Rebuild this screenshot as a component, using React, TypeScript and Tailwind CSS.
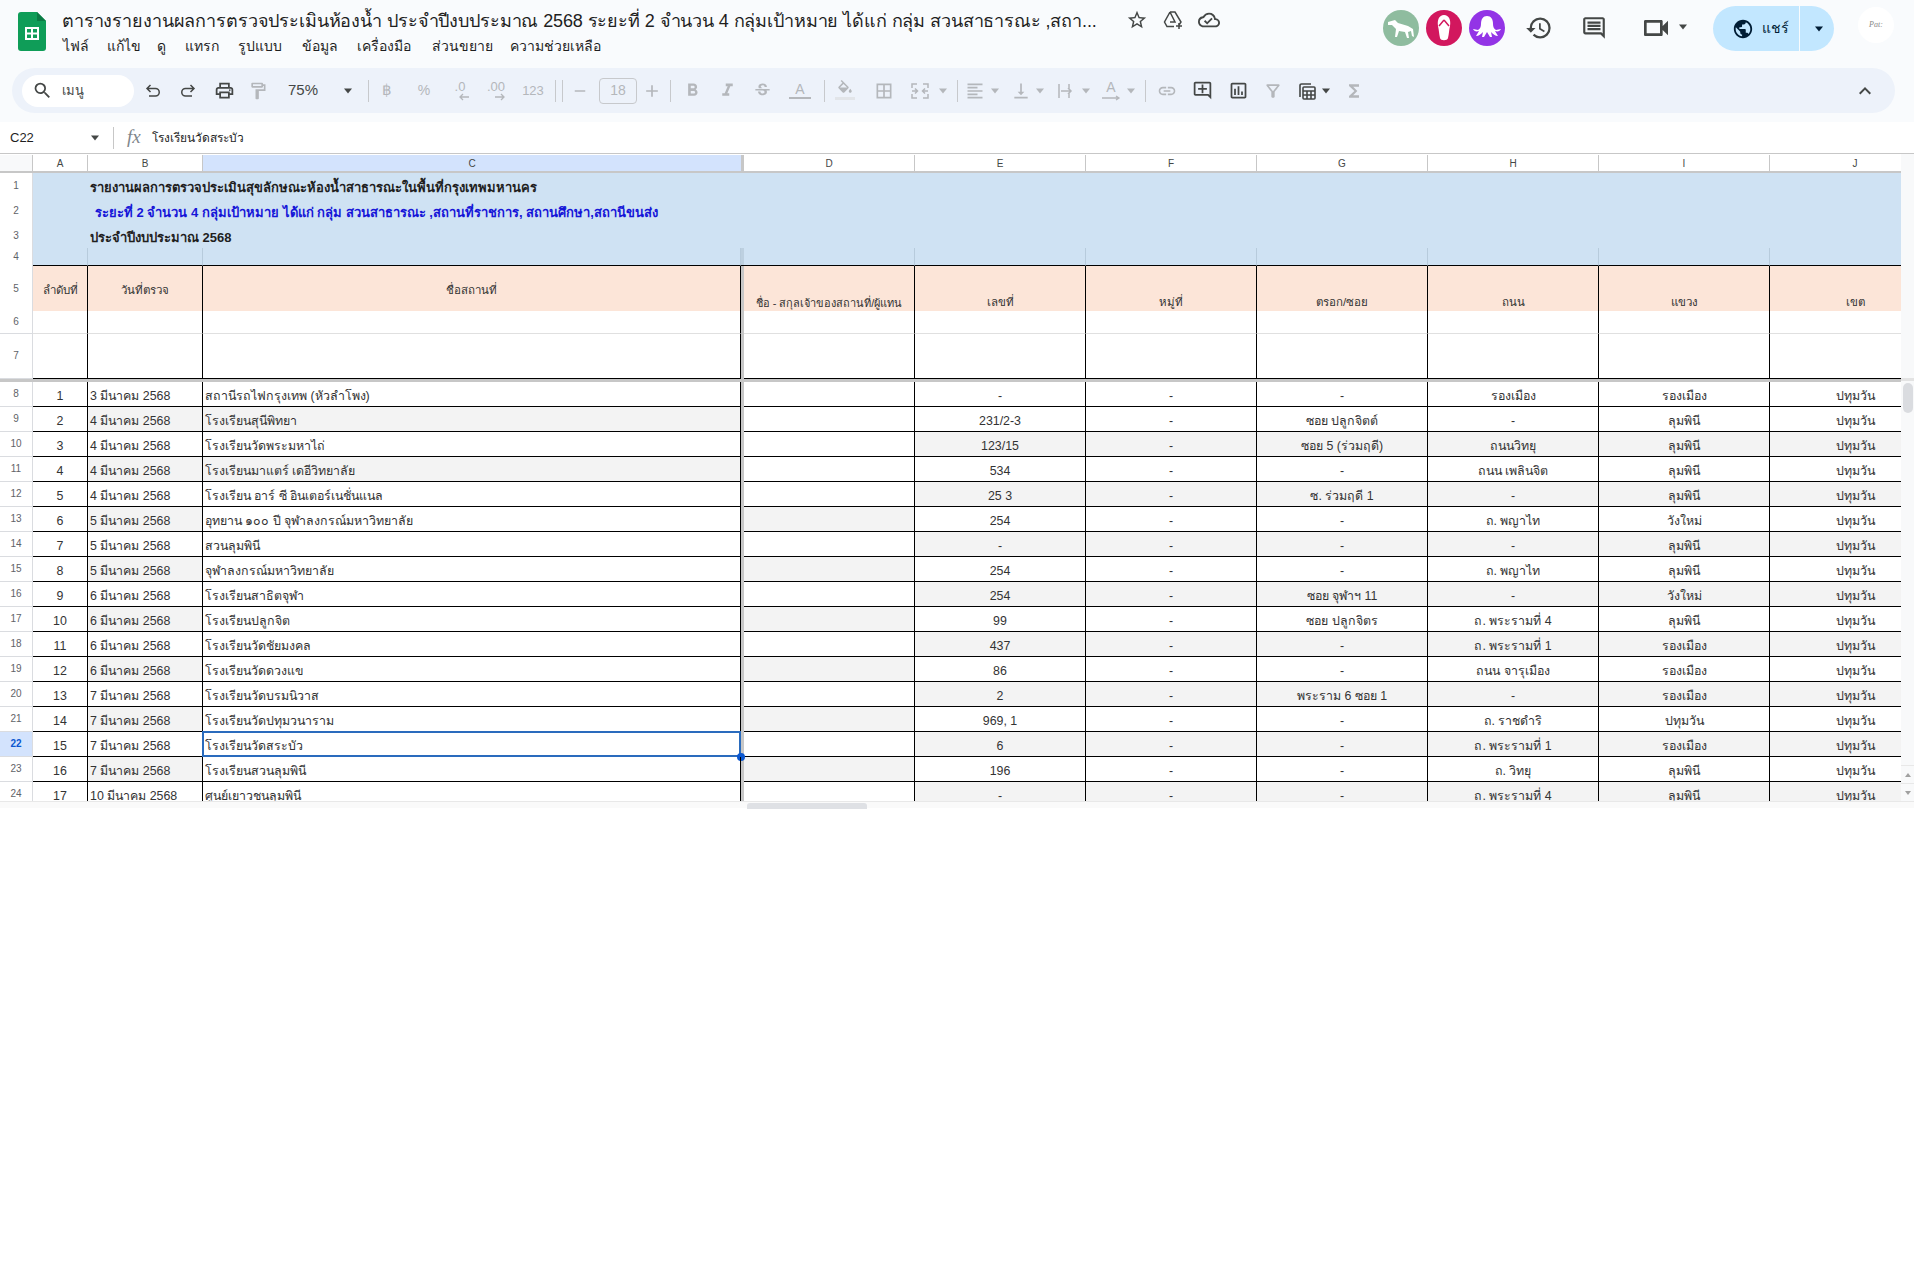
import React from "react";
import {
  MdSearch, MdOutlinePrint, MdOutlineFormatPaint, MdRemove, MdAdd,
  MdFormatBold, MdFormatItalic, MdStrikethroughS, MdBorderAll, MdFormatAlignLeft,
  MdVerticalAlignBottom, MdLink, MdOutlineAddComment, MdOutlineInsertChart, MdOutlineFilterAlt, MdFunctions,
  MdKeyboardArrowUp, MdStarBorder, MdOutlineCloudDone, MdHistory, MdOutlineComment,
  MdOutlineVideocam, MdPublic,
} from "react-icons/md";

const dis = "text-[#b4b7bb]";
const on = "text-[#444746]";

function Caret({ cls = "" }: { cls?: string }) {
  return (
    <div className={`flex w-3 shrink-0 items-center justify-center ${cls}`}>
      <svg width="10" height="6" viewBox="0 0 10 6"><path d="M1 0.5h8L5 5.5z" fill="currentColor" /></svg>
    </div>
  );
}
function Slot({ cls, children }: { cls: string; children: React.ReactNode }) {
  return <div className={`flex h-6 w-6 shrink-0 items-center justify-center ${cls}`}>{children}</div>;
}
function Sep({ cls }: { cls: string }) {
  return <div className={`h-[22px] w-px shrink-0 bg-[#c7c9cc] ${cls}`} />;
}
function Decimal({ label, right }: { label: string; right?: boolean }) {
  return (
    <div className="flex flex-col items-center leading-none">
      <span className="text-[13px] leading-[12px]">{label}</span>
      <svg width="12" height="8" viewBox="0 0 12 8" className="ml-2">
        {right ? <path d="M1 4h9M7 1l3 3-3 3" stroke="currentColor" fill="none" strokeWidth="1.3" /> : <path d="M11 4H2M5 1 2 4l3 3" stroke="currentColor" fill="none" strokeWidth="1.3" />}
      </svg>
    </div>
  );
}

function Toolbar() {
  return (
    <div className="ml-3 mr-[19px] flex h-[45px] items-center rounded-[23px] bg-[#edf2fa] pl-[10px]">
      <div className="flex h-8 w-[112px] shrink-0 items-center rounded-2xl bg-white pl-[10px]">
        <MdSearch size={21} className={on} />
        <span className="ml-[9px] text-[13px] text-[#444746]">เมนู</span>
      </div>
      <Slot cls={`ml-[7px] ${on}`}>
        <svg width="18" height="18" viewBox="0 0 18 18" fill="none" stroke="currentColor" strokeWidth="1.5">
          <path d="M6.500 3 3 6.500 6.500 10M3 6.500h8.500a3.700 3.700 0 0 1 0 7.500H5" />
        </svg>
      </Slot>
      <Slot cls={`ml-[11px] ${on}`}>
        <svg width="18" height="18" viewBox="0 0 18 18" fill="none" stroke="currentColor" strokeWidth="1.5">
          <path d="M11.500 3 15 6.500 11.500 10M15 6.500H6.500a3.700 3.700 0 0 0 0 7.500H13" />
        </svg>
      </Slot>
      <Slot cls={`ml-[12px] ${on}`}><MdOutlinePrint size={21} /></Slot>
      <Slot cls={`ml-[10px] ${dis}`}><MdOutlineFormatPaint size={20} /></Slot>
      <div className={`ml-[13px] w-10 shrink-0 text-center text-[15px] ${on}`}>75%</div>
      <Caret cls={`ml-[19px] ${on}`} />
      <Sep cls="ml-[14px]" />
      <Slot cls={`ml-[6px] text-[15px] ${dis}`}>฿</Slot>
      <Slot cls={`ml-[13px] text-[14px] ${dis}`}>%</Slot>
      <Slot cls={`ml-[12px] ${dis}`}><Decimal label=".0" /></Slot>
      <Slot cls={`ml-[12px] ${dis}`}><Decimal label=".00" right /></Slot>
      <Slot cls={`ml-[13px] text-[13px] ${dis}`}>123</Slot>
      <Sep cls="ml-[10px]" />
      <Sep cls="ml-[6px]" />
      <Slot cls={`ml-[5px] ${dis}`}><MdRemove size={18} /></Slot>
      <div className="ml-[7px] flex h-[26px] w-[38px] shrink-0 items-center justify-center rounded-[4px] border border-[#c7c9cc] text-[14px] text-[#b4b7bb]">18</div>
      <Slot cls={`ml-[3px] ${dis}`}><MdAdd size={20} /></Slot>
      <Sep cls="ml-[6px]" />
      <Slot cls={`ml-[9px] ${dis}`}><MdFormatBold size={21} /></Slot>
      <Slot cls={`ml-[11px] ${dis}`}><MdFormatItalic size={21} /></Slot>
      <Slot cls={`ml-[11px] ${dis}`}><MdStrikethroughS size={19} /></Slot>
      <Slot cls={`ml-[14px] ${dis}`}>
        <div className="flex flex-col items-center">
          <span className="text-[14px] leading-[15px]">A</span>
          <span className="h-[2px] w-[22px] bg-[#b4b7bb]" />
        </div>
      </Slot>
      <Sep cls="ml-[12px]" />
      <Slot cls={`ml-[8px] ${dis}`}>
        <div className="flex flex-col items-center">
          <svg width="18" height="15" viewBox="0 0 24 20" fill="currentColor" className="-mt-[2px]">
            <path d="M16.56 8.94L7.620 0 6.210 1.410l2.380 2.380-5.150 5.150c-.59.59-.59 1.540 0 2.120l5.500 5.500c.29.29.68.44 1.060.44s.77-.15 1.060-.44l5.500-5.500c.59-.58.59-1.530 0-2.120zM5.210 10L10 5.210 14.790 10H5.210zM19 11.500s-2 2.170-2 3.500c0 1.100.9 2 2 2s2-.9 2-2c0-1.330-2-3.500-2-3.500z" />
          </svg>
          <span className="mt-[2px] h-[3px] w-5 bg-[#e2e5e9]" />
        </div>
      </Slot>
      <Slot cls={`ml-[15px] ${dis}`}><MdBorderAll size={20} /></Slot>
      <Slot cls={`ml-[12px] ${dis}`}>
        <svg width="18" height="18" viewBox="0 0 18 18" fill="none" stroke="currentColor" strokeWidth="1.500">
          <path d="M1 6V2h5M17 6V2h-5M1 12v4h5M17 12v4h-5M1 9h5M17 9h-5M4 6.500 6.500 9 4 11.500M14 6.500 11.500 9l2.500 2.500" />
        </svg>
      </Slot>
      <Caret cls={`ml-[5px] ${dis}`} />
      <Sep cls="ml-[8px]" />
      <Slot cls={`ml-[5px] ${dis}`}><MdFormatAlignLeft size={20} /></Slot>
      <Caret cls={`ml-[2px] ${dis}`} />
      <Slot cls={`ml-[8px] ${dis}`}><MdVerticalAlignBottom size={20} /></Slot>
      <Caret cls={`ml-[1px] ${dis}`} />
      <Slot cls={`ml-[7px] ${dis}`}>
        <svg width="18" height="18" viewBox="0 0 18 18" fill="none" stroke="currentColor" strokeWidth="1.500">
          <path d="M3 2v14M13 2v5M13 11v5M5 9h10M12 6l3 3-3 3" />
        </svg>
      </Slot>
      <Caret cls={`ml-[3px] ${dis}`} />
      <Slot cls={`ml-[7px] ${dis}`}>
        <div className="flex flex-col items-center">
          <span className="text-[14px] leading-[15px]">A</span>
          <svg width="20" height="6" viewBox="0 0 20 6" fill="none" stroke="currentColor" strokeWidth="1.300"><path d="M1 3h17M15 1l3 2-3 2" /></svg>
        </div>
      </Slot>
      <Caret cls={`ml-[2px] ${dis}`} />
      <Sep cls="ml-[8px]" />
      <Slot cls={`ml-[9px] ${dis}`}><MdLink size={20} /></Slot>
      <Slot cls={`ml-[11px] ${on}`}><MdOutlineAddComment size={21} /></Slot>
      <Slot cls={`ml-[12px] ${on}`}><MdOutlineInsertChart size={21} /></Slot>
      <Slot cls={`ml-[11px] ${dis}`}><MdOutlineFilterAlt size={20} /></Slot>
      <Slot cls={`ml-[10px] ${on}`}>
        <svg width="20" height="20" viewBox="0 0 20 20" fill="none" stroke="currentColor" strokeWidth="1.600">
          <path d="M3 16V4.500A1.500 1.500 0 0 1 4.500 3H14" />
          <rect x="6" y="6" width="12" height="12" rx="1" />
          <path d="M6 10h12M6 14h12M10 10v8M14 10v8" />
        </svg>
      </Slot>
      <Caret cls={`ml-[1px] ${on}`} />
      <Slot cls={`ml-[10px] ${dis}`}><MdFunctions size={20} /></Slot>
      <Slot cls={`ml-auto mr-[18px] ${on}`}><MdKeyboardArrowUp size={24} /></Slot>
    </div>
  );
}

function Horse() {
  return (
    <svg width="36" height="36" viewBox="0 0 36 36" className="shrink-0">
      <circle cx="18" cy="18" r="18" fill="#8fbc9f" />
      <path d="M5 12l7-2 3 3 10 3 5 3 1 8-2-1-1-5-3 1 1 6h-2l-2-6-6-1-2 6h-2l1-8-4-4-4 0z" fill="#fff" />
    </svg>
  );
}
function Flop() {
  return (
    <svg width="36" height="36" viewBox="0 0 36 36" className="shrink-0">
      <circle cx="18" cy="18" r="18" fill="#d2175e" />
      <path d="M18 5c5 0 7 5 6 11-1 4-1 8-2 12-.5 3-7.500 3-8 0-1-4-1-8-2-12-1-6 1-11 6-11z" fill="#fff" />
      <path d="M18 10l-5 6M18 10l5 6" stroke="#d2175e" strokeWidth="1.500" />
    </svg>
  );
}
function Octopus() {
  return (
    <svg width="36" height="36" viewBox="0 0 36 36" className="shrink-0">
      <circle cx="18" cy="18" r="18" fill="#9334e6" />
      <path d="M18 6c4 0 6 3 6 8 0 3 1 5 3 6l5-1c-1 2-3 3-6 2l3 5c-3 0-5-2-7-4l1 5h-2l-3-5-3 5h-2l1-5c-2 2-4 4-7 4l3-5c-3 1-5 0-6-2l5 1c2-1 3-3 3-6 0-5 2-8 6-8z" fill="#fff" />
    </svg>
  );
}

function Header() {
  const menu: [string, string][] = [
    ["ไฟล์", "w-[44px]"], ["แก้ไข", "w-[50px]"], ["ดู", "w-[28px]"], ["แทรก", "w-[53px]"], ["รูปแบบ", "w-[64px]"],
    ["ข้อมูล", "w-[55px]"], ["เครื่องมือ", "w-[75px]"], ["ส่วนขยาย", "w-[78px]"], ["ความช่วยเหลือ", "w-[100px]"],
  ];
  return (
    <div className="h-[122px] bg-[#f9fbfd] pt-[6px]">
      <div className="flex h-[46px] items-start pl-[18px]">
        <svg width="28" height="39" viewBox="0 0 28 39" className="mt-[6px] shrink-0">
          <path d="M3 0h16l9 9v27a3 3 0 0 1-3 3H3a3 3 0 0 1-3-3V3a3 3 0 0 1 3-3z" fill="#0f9d58" />
          <path d="M19 0l9 9h-9z" fill="#0b7a44" />
          <path d="M7 15h14v13H7z" fill="#fff" />
          <path d="M9 17h4v3.500H9zM15 17h4v3.500h-4zM9 22.500h4V26H9zM15 22.500h4V26h-4z" fill="#0f9d58" />
        </svg>
        <div className="ml-4 flex w-[1034px] flex-col">
          <div className="h-[30px] whitespace-nowrap text-[18px] leading-[30px] tracking-[-0.13px] text-[#1f1f1f]">
            ตารางรายงานผลการตรวจประเมินห้องน้ำ ประจำปีงบประมาณ 2568 ระยะที่ 2 จำนวน 4 กลุ่มเป้าหมาย ได้แก่ กลุ่ม สวนสาธารณะ ,สถา...
          </div>
          <div className="-mt-px ml-px flex h-[22px] items-center text-[14px] text-[#1f1f1f]">
            {menu.map(([t, w]) => <span key={t} className={`shrink-0 whitespace-nowrap ${w}`}>{t}</span>)}
          </div>
        </div>
        <div className="ml-[30px] mt-[3px] flex items-center text-[#444746]">
          <MdStarBorder size={22} />
          <svg width="22" height="22" viewBox="0 0 22 22" fill="none" stroke="currentColor" strokeWidth="1.500" className="ml-[14px]">
            <path d="M8 3h5l6 10-2 3M8 3 2.500 13 5 17.500h7M8 3l5 10H8" />
            <path d="M17 14v6M14 17h6" />
          </svg>
          <MdOutlineCloudDone size={22} className="ml-[14px]" />
        </div>
        <div className="ml-[163px] mt-[4px] flex items-center gap-[7px]">
          <Horse /><Flop /><Octopus />
        </div>
        <MdHistory size={28} className="ml-[20px] mt-[8px] shrink-0 text-[#444746]" />
        <MdOutlineComment size={26} className="ml-[28px] mt-[9px] shrink-0 text-[#444746]" />
        <MdOutlineVideocam size={32} className="ml-[33px] mt-[6px] shrink-0 text-[#444746]" />
        <Caret cls="ml-[5px] mt-[18px] text-[#444746]" />
        <div className="ml-6 flex h-[45px] w-[121px] shrink-0 items-center rounded-[23px] bg-[#c2e7ff] text-[#001d35]">
          <MdPublic size={22} className="ml-[19px] shrink-0" />
          <span className="ml-[8px] w-[27px] whitespace-nowrap text-[14px]">แชร์</span>
          <span className="ml-[10px] h-full w-px bg-[#f9fbfd]" />
          <Caret cls="ml-[13px]" />
        </div>
        <div className="ml-[24px] mt-[1px] flex h-9 w-9 shrink-0 items-center justify-center rounded-full bg-white font-['Liberation_Serif',serif] text-[8px] italic text-[#888]">Pat:</div>
      </div>
      <div className="mt-[16px]"><Toolbar /></div>
    </div>
  );
}

function FormulaBar() {
  return (
    <div className="flex h-[31px] items-center bg-white text-[#1f1f1f]">
      <span className="ml-[10px] w-[79px] text-[13px]">C22</span>
      <Caret cls="text-[#444746]" />
      <span className="ml-[12px] h-[22px] w-px bg-[#c7c7c7]" />
      <span className="ml-[13px] w-[25px] font-['Liberation_Serif',serif] text-[19px] italic text-[#80868b]">fx</span>
      <span className="text-[12px]">โรงเรียนวัดสระบัว</span>
    </div>
  );
}

type D = [string, string, string, string, string, string, string];
const base = "flex h-full shrink-0 items-center justify-center whitespace-nowrap";
const W = {
  H: "w-[33px]", A: "w-[55px]", B: "w-[115px]", C: "w-[538px]", X: "w-[3px]", S: "w-[171px]", J: "w-[171px]",
};

const rows: D[] = [
  ["3 มีนาคม 2568", "สถานีรถไฟกรุงเทพ (หัวลำโพง)", "-", "-", "-", "รองเมือง", "รองเมือง"],
  ["4 มีนาคม 2568", "โรงเรียนสุนีพิทยา", "231/2-3", "-", "ซอย ปลูกจิตต์", "-", "ลุมพินี"],
  ["4 มีนาคม 2568", "โรงเรียนวัดพระมหาไถ่", "123/15", "-", "ซอย 5 (ร่วมฤดี)", "ถนนวิทยุ", "ลุมพินี"],
  ["4 มีนาคม 2568", "โรงเรียนมาแตร์ เดอีวิทยาลัย", "534", "-", "-", "ถนน เพลินจิต", "ลุมพินี"],
  ["4 มีนาคม 2568", "โรงเรียน อาร์ ซี อินเตอร์เนชั่นแนล", "25 3", "-", "ซ. ร่วมฤดี 1", "-", "ลุมพินี"],
  ["5 มีนาคม 2568", "อุทยาน ๑๐๐ ปี จุฬาลงกรณ์มหาวิทยาลัย", "254", "-", "-", "ถ. พญาไท", "วังใหม่"],
  ["5 มีนาคม 2568", "สวนลุมพินี", "-", "-", "-", "-", "ลุมพินี"],
  ["5 มีนาคม 2568", "จุฬาลงกรณ์มหาวิทยาลัย", "254", "-", "-", "ถ. พญาไท", "ลุมพินี"],
  ["6 มีนาคม 2568", "โรงเรียนสาธิตจุฬา", "254", "-", "ซอย จุฬาฯ 11", "-", "วังใหม่"],
  ["6 มีนาคม 2568", "โรงเรียนปลูกจิต", "99", "-", "ซอย ปลูกจิตร", "ถ. พระรามที่ 4", "ลุมพินี"],
  ["6 มีนาคม 2568", "โรงเรียนวัดชัยมงคล", "437", "-", "-", "ถ. พระรามที่ 1", "รองเมือง"],
  ["6 มีนาคม 2568", "โรงเรียนวัดดวงแข", "86", "-", "-", "ถนน จารุเมือง", "รองเมือง"],
  ["7 มีนาคม 2568", "โรงเรียนวัดบรมนิวาส", "2", "-", "พระราม 6 ซอย 1", "-", "รองเมือง"],
  ["7 มีนาคม 2568", "โรงเรียนวัดปทุมวนาราม", "969, 1", "-", "-", "ถ. ราชดำริ", "ปทุมวัน"],
  ["7 มีนาคม 2568", "โรงเรียนวัดสระบัว", "6", "-", "-", "ถ. พระรามที่ 1", "รองเมือง"],
  ["7 มีนาคม 2568", "โรงเรียนสวนลุมพินี", "196", "-", "-", "ถ. วิทยุ", "ลุมพินี"],
  ["10 มีนาคม 2568", "ศูนย์เยาวชนลุมพินี", "-", "-", "-", "ถ. พระรามที่ 4", "ลุมพินี"],
];

function RowHead({ n, sel }: { n: number; sel?: boolean }) {
  return (
    <div className={`${base} ${W.H} border-b border-r border-[#dadce0] pb-[1px] text-[10px] ${sel ? "bg-[#d3e3fd] font-bold text-[#0b57d0]" : "bg-white text-[#5f6368]"}`}>{n}</div>
  );
}

function ColHead() {
  const c: [string, string][] = [["A", W.A], ["B", W.B], ["C", W.C], ["", W.X], ["D", W.S], ["E", W.S], ["F", W.S], ["G", W.S], ["H", W.S], ["I", W.S], ["J", W.J]];
  return (
    <div className="flex h-[19px] border-b-2 border-[#c7c7c7] pt-px text-[10px] text-[#444746]">
      <div className={`${W.H} h-full shrink-0 border-r border-[#c7c7c7] bg-[#f8f9fa]`} />
      {c.map(([t, w], i) => (
        <div key={i} className={`${base} ${w} ${t === "" ? "bg-[#c7c7c7]" : t === "C" ? "bg-[#d3e3fd]" : "border-r border-[#c7c7c7] bg-white"}`}>{t}</div>
      ))}
    </div>
  );
}

function Blue({ n, h, cls, text }: { n: number; h: string; cls: string; text: string }) {
  return (
    <div className={`flex ${h}`}>
      <div className={`${base} ${W.H} border-r border-[#dadce0] bg-white pb-[1px] text-[10px] text-[#5f6368]`}>{n}</div>
      <div className={`flex h-full w-[1868px] shrink-0 items-center whitespace-nowrap bg-[#cfe2f3] pt-[4px] text-[13px] font-bold ${cls}`}>{text}</div>
    </div>
  );
}

function Row4() {
  const line = "border-r border-[#b7cbdc]";
  return (
    <div className="flex h-[18px]">
      <div className={`${base} ${W.H} border-r border-[#dadce0] bg-white pb-[1px] text-[10px] text-[#5f6368]`}>4</div>
      {[W.A, W.B, W.C].map((w) => <div key={w} className={`${w} h-full shrink-0 bg-[#cfe2f3] ${line} border-b border-b-black`} />)}
      <div className={`${W.X} h-full shrink-0 border-b border-b-black bg-[#bdd0e0]`} />
      {[0, 1, 2, 3, 4, 5].map((i) => <div key={i} className={`${W.S} h-full shrink-0 bg-[#cfe2f3] ${line} border-b border-b-black`} />)}
      <div className={`${W.J} h-full shrink-0 border-b border-b-black bg-[#cfe2f3]`} />
    </div>
  );
}

function Row5() {
  const ct = `${base} bg-[#fce5d8] border-r border-black pt-[4px] text-[11.5px] text-[#333]`;
  const bt = `flex h-full shrink-0 items-end justify-center whitespace-nowrap bg-[#fce5d8] border-r border-black text-[11.5px] text-[#333]`;
  return (
    <div className="flex h-[45px]">
      <div className={`${base} ${W.H} border-r border-[#dadce0] bg-white pb-[1px] text-[10px] text-[#5f6368]`}>5</div>
      <div className={`${ct} ${W.A}`}>ลำดับที่</div>
      <div className={`${ct} ${W.B}`}>วันที่ตรวจ</div>
      <div className={`${ct} ${W.C}`}>ชื่อสถานที่</div>
      <div className={`${W.X} h-full shrink-0 bg-[#c7c7c7]`} />
      <div className={`${bt} ${W.S} text-[11px]`}>ชื่อ - สกุลเจ้าของสถานที่/ผู้แทน</div>
      <div className={`${bt} ${W.S}`}>เลขที่</div>
      <div className={`${bt} ${W.S}`}>หมู่ที่</div>
      <div className={`${bt} ${W.S}`}>ตรอก/ซอย</div>
      <div className={`${bt} ${W.S}`}>ถนน</div>
      <div className={`${bt} ${W.S}`}>แขวง</div>
      <div className={`${bt} ${W.J} border-r-0`}>เขต</div>
    </div>
  );
}

function EmptyRow({ n, h, b }: { n: number; h: string; b: string }) {
  const cell = `h-full shrink-0 border-r border-r-black border-b ${b}`;
  return (
    <div className={`flex ${h}`}>
      <RowHead n={n} />
      <div className={`${cell} ${W.A}`} />
      <div className={`${cell} ${W.B}`} />
      <div className={`${cell} ${W.C}`} />
      <div className={`${W.X} h-full shrink-0 bg-[#c7c7c7]`} />
      {[0, 1, 2, 3, 4, 5].map((i) => <div key={i} className={`${cell} ${W.S}`} />)}
      <div className={`h-full shrink-0 border-b ${b} ${W.J}`} />
    </div>
  );
}

function DataRow({ d, i }: { d: D; i: number }) {
  const n = i + 8;
  const odd = n % 2 === 1;
  const cell = "flex h-full shrink-0 items-center whitespace-nowrap border-b border-r border-black text-[12.4px] text-[#333] pt-[5px]";
  const gray = "bg-[#f3f3f3]";
  const bS = odd ? gray : "";
  const cS = n === 9 || n === 11 ? gray : "";
  const dS = odd && n >= 13 ? gray : "";
  const eS = !odd && n > 8 ? gray : "";
  return (
    <div className="flex h-[25px]">
      <RowHead n={n} sel={n === 22} />
      <div className={`${cell} ${W.A} justify-center`}>{i + 1}</div>
      <div className={`${cell} ${W.B} ${bS} pl-[2px] text-[11.5px]`}>{d[0]}</div>
      <div className={`${cell} ${W.C} ${cS} relative pl-[2px]`}>
        {d[1]}
        {n === 22 && (
          <>
            <div className="absolute -left-px -top-px bottom-[-1px] right-[-1px] border-2 border-[#2a6bbd]" />
            <div className="absolute bottom-[-5px] right-[-5px] h-2 w-2 rounded-full bg-[#0b57d0]" />
          </>
        )}
      </div>
      <div className={`${W.X} h-full shrink-0 bg-[#c7c7c7]`} />
      <div className={`${cell} ${W.S} ${dS}`} />
      {[d[2], d[3], d[4], d[5], d[6]].map((t, k) => (
        <div key={k} className={`${cell} ${W.S} ${eS} justify-center`}>{t}</div>
      ))}
      <div className={`${cell} ${W.J} ${eS} justify-center border-r-0`}>ปทุมวัน</div>
    </div>
  );
}

function Sheet() {
  return (
    <div className="flex h-[655px] flex-col">
      <div className="flex h-[648px] border-t border-[#c7c7c7]">
        <div className="w-[1901px] shrink-0 overflow-hidden">
          <ColHead />
          <Blue n={1} h="h-[25px]" cls="pl-[57px] text-[#1f1f1f]" text="รายงานผลการตรวจประเมินสุขลักษณะห้องน้ำสาธารณะในพื้นที่กรุงเทพมหานคร" />
          <Blue n={2} h="h-[25px]" cls="pl-[62px] text-[#1616d8]" text="ระยะที่ 2 จำนวน 4 กลุ่มเป้าหมาย ได้แก่ กลุ่ม สวนสาธารณะ ,สถานที่ราชการ, สถานศึกษา,สถานีขนส่ง" />
          <Blue n={3} h="h-[25px]" cls="pl-[57px] text-[#1f1f1f]" text="ประจำปีงบประมาณ 2568" />
          <Row4 />
          <Row5 />
          <EmptyRow n={6} h="h-[23px]" b="border-b-[#e0e0e0]" />
          <EmptyRow n={7} h="h-[45px]" b="border-b-black" />
          <div className="h-[3px] bg-[#c7c7c7]" />
          {rows.map((d, i) => <DataRow key={i} d={d} i={i} />)}
        </div>
        <div className="flex w-[13px] shrink-0 flex-col bg-[#f8f9fa]">
          <div className="h-[224px]" />
          <div className="h-[3px] bg-[#e3e3e3]" />
          <div className="mx-auto mt-[2px] h-[30px] w-[10px] rounded-[5px] bg-[#dadce0]" />
          <div className="flex-1" />
          <div className="flex h-[18px] items-center justify-center border-t border-[#e8e8e8] text-[#a0a0a0]">
            <svg width="6" height="4" viewBox="0 0 6 4"><path d="M3 0l3 4H0z" fill="currentColor" /></svg>
          </div>
          <div className="flex h-[18px] items-center justify-center border-t border-[#e8e8e8] text-[#a0a0a0]">
            <svg width="6" height="4" viewBox="0 0 6 4"><path d="M0 0h6L3 4z" fill="currentColor" /></svg>
          </div>
        </div>
      </div>
      <div className="flex h-[7px] items-start border-t border-[#e8e8e8] bg-[#fafafa]">
        <div className="ml-[747px] mt-[1px] h-[6px] w-[120px] rounded-t-[3px] bg-[#dfe1e5]" />
      </div>
    </div>
  );
}

export default function App() {
  return (
    <div className="min-h-[1288px] bg-white font-['Liberation_Sans','Noto_Sans',sans-serif]">
      <Header />
      <FormulaBar />
      <Sheet />
    </div>
  );
}
